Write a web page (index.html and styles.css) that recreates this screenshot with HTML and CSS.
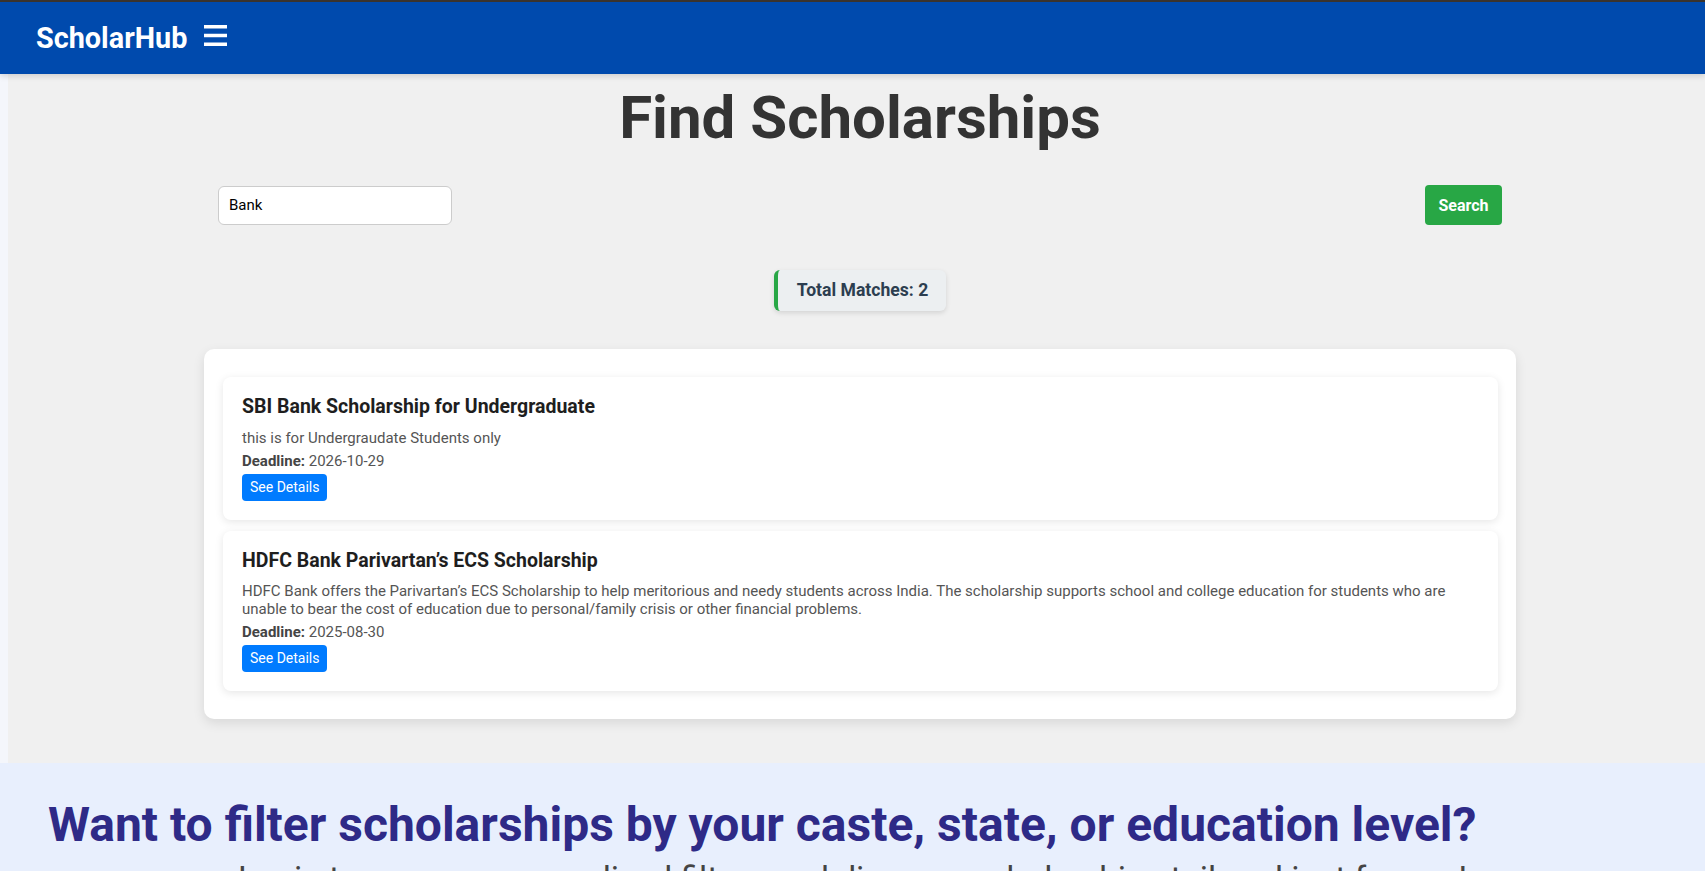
FILE: index.html
```html
<!DOCTYPE html>
<html lang="en">
<head>
<meta charset="utf-8">
<title>ScholarHub - Find Scholarships</title>
<link rel="stylesheet" href="styles.css">
</head>
<body>
<header class="navbar">
  <a class="brand" href="#">ScholarHub</a>
  <button class="menu-toggle" type="button" aria-label="Menu">
    <svg width="23" height="21" viewBox="0 0 23 21" aria-hidden="true">
      <rect x="0" y="0" width="23" height="3.5" fill="#fff"/>
      <rect x="0" y="8.75" width="23" height="3.5" fill="#fff"/>
      <rect x="0" y="17.5" width="23" height="3.5" fill="#fff"/>
    </svg>
  </button>
</header>

<main class="page">
  <h1 class="page-title">Find Scholarships</h1>

  <form class="search-bar">
    <input class="search-input" type="text" value="Bank">
    <button class="search-btn" type="button">Search</button>
  </form>

  <div class="match-row">
    <div class="match-count">Total Matches: 2</div>
  </div>

  <section class="results">
    <article class="sch-card">
      <h3 class="sch-title">SBI Bank Scholarship for Undergraduate</h3>
      <p class="sch-desc">this is for Undergraudate Students only</p>
      <p class="sch-deadline"><strong>Deadline:</strong> 2026-10-29</p>
      <a class="details-btn" href="#">See Details</a>
    </article>
    <article class="sch-card">
      <h3 class="sch-title">HDFC Bank Parivartan’s ECS Scholarship</h3>
      <p class="sch-desc">HDFC Bank offers the Parivartan’s ECS Scholarship to help meritorious and needy students across India. The scholarship supports school and college education for students who are unable to bear the cost of education due to personal/family crisis or other financial problems.</p>
      <p class="sch-deadline"><strong>Deadline:</strong> 2025-08-30</p>
      <a class="details-btn" href="#">See Details</a>
    </article>
  </section>
</main>

<section class="cta">
  <h2 class="cta-title">Want to filter scholarships by your caste, state, or education level?</h2>
  <p class="cta-text">Login to access personalized filters and discover scholarships tailored just for you!</p>
</section>
</body>
</html>
```

FILE: styles.css
```css
html {
  scrollbar-width: none;
}

body {
  margin: 0;
  background: #f4f6fb;
  font-family: Roboto, "Liberation Sans", Arial, sans-serif;
  color: #333;
}

.navbar {
  height: 72px;
  border-top: 2px solid #3a332d;
  background: #004aad;
  display: flex;
  align-items: center;
  gap: 17px;
  padding: 0 36px;
  box-shadow: 0 2px 6px rgba(0, 0, 0, 0.15);
  position: relative;
  z-index: 2;
}

.brand {
  color: #fff;
  font-size: 28.8px;
  font-weight: 700;
  text-decoration: none;
  line-height: 1;
}

.menu-toggle {
  background: none;
  border: 0;
  padding: 0;
  display: flex;
  margin-bottom: 6px;
  cursor: pointer;
}

.page {
  margin-left: 8px;
  padding: 9px 0 44px 7px;
  background: #f0f0f0;
}

.page-title {
  margin: 0 0 32px;
  text-align: center;
  font-size: 60px;
  font-weight: 700;
  color: #333;
  line-height: 70px;
}

.search-bar {
  max-width: 1284px;
  margin: 0 auto;
  display: flex;
  justify-content: space-between;
  align-items: center;
}

.search-input {
  box-sizing: border-box;
  width: 234px;
  height: 39px;
  padding: 0 10px;
  border: 1px solid #ccc;
  border-radius: 6px;
  background: #fff;
  font-family: inherit;
  font-size: 15px;
  color: #000;
}

.search-btn {
  box-sizing: border-box;
  width: 77px;
  height: 40px;
  border: 0;
  border-radius: 4px;
  background: #28a745;
  color: #fff;
  font-family: inherit;
  font-size: 16px;
  font-weight: 700;
}

.match-row {
  display: flex;
  justify-content: center;
  margin-top: 45px;
}

.match-count {
  background: #eceff1;
  border-left: 4px solid #28a745;
  border-radius: 6px;
  padding: 10px 18px 10px 19px;
  font-size: 17.6px;
  font-weight: 700;
  color: #2c3e50;
  line-height: 21px;
  box-shadow: 0 2px 5px rgba(0, 0, 0, 0.12);
}

.results {
  max-width: 1312px;
  box-sizing: border-box;
  margin: 38px auto 0;
  padding: 28px 18px 28px 19px;
  background: #fff;
  border-radius: 10px;
  box-shadow: 0 4px 12px rgba(0, 0, 0, 0.1);
  display: flex;
  flex-direction: column;
  gap: 11px;
}

.sch-card {
  background: #fff;
  border-radius: 8px;
  padding: 19px 19px 19px;
  box-shadow: 0 2px 8px rgba(0, 0, 0, 0.1);
}

.sch-title {
  margin: 0 0 10px;
  font-size: 19.5px;
  font-weight: 700;
  color: #1e1e1e;
  line-height: 22.5px;
}

.sch-desc,
.sch-deadline {
  margin: 0 0 5px;
  font-size: 15px;
  line-height: 18px;
  color: #555;
}

.sch-deadline {
  margin-bottom: 4px;
}

.sch-deadline strong {
  color: #444;
}

.details-btn {
  display: inline-block;
  padding: 5px 8px;
  background: #007bff;
  color: #fff;
  border-radius: 4px;
  font-size: 14px;
  line-height: 17px;
  text-decoration: none;
}

.cta {
  background: #e8effd;
  padding: 33px 48px 40px;
}

.cta-title {
  margin: 0;
  font-size: 48px;
  font-weight: 700;
  color: #2e2a87;
  line-height: 58px;
}

.cta-text {
  margin: 5px 0 0;
  text-align: center;
  font-size: 33.6px;
  color: #444;
}
```
